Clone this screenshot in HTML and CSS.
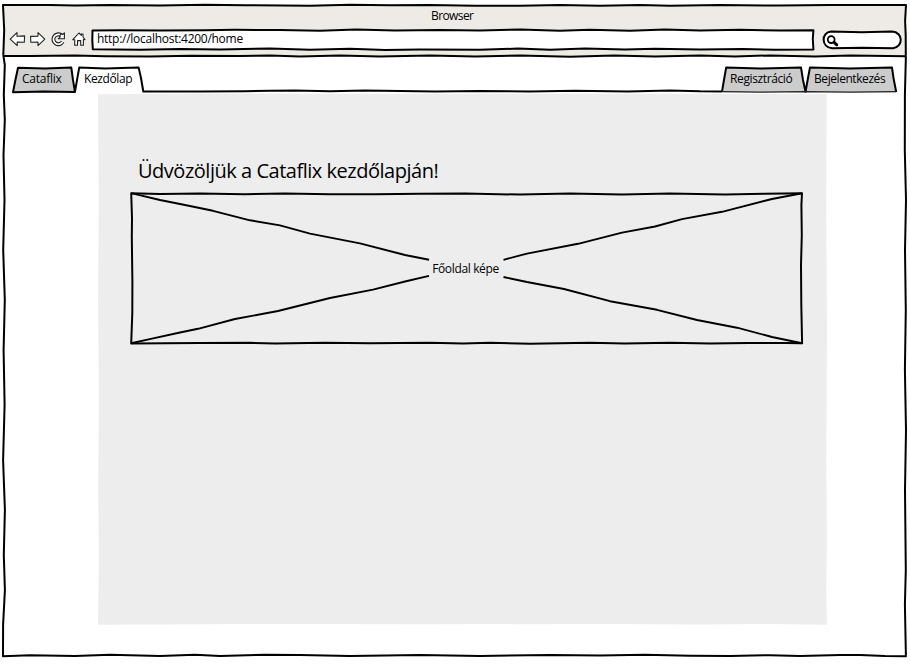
FILE: index.html
```
<!DOCTYPE html>
<html lang="hu">
<head>
<meta charset="utf-8">
<title>Cataflix</title>
<link rel="stylesheet" href="styles.css">
</head>
<body>
<div class="window">
  <header class="chrome">
    <svg class="sketch" viewBox="0 0 910 57" aria-hidden="true">
      <path class="chrome-fill" d="M3 5H906V56H3Z"/>
    </svg>
    <div class="title"><span>Browser</span></div>
    <div class="toolbar">
      <svg class="nav-icons" viewBox="8 30 80 18" aria-hidden="true">
        <path d="M10.2 39.2 17 32.6V36.2L24.6 35.9 24.3 42.3 17.2 42V45.6Z"/>
        <path d="M44.8 39.2 38 32.6V36.1L30.6 36.4 30.8 42.2 38 42V45.6Z"/>
        <path class="arc-outer" d="M61 35.2A4.9 4.9 0 1 0 62.6 41.6"/>
        <path class="arc-inner" d="M61 35.2A4.9 4.9 0 1 0 62.9 41.2"/>
        <path d="M64.4 32.8V38.8H58.2L60.2 36.8A2.9 2.9 0 0 0 59.4 36.4L61.4 33.6 62.6 34.5Z"/>
        <path d="M72.8 39.7 79 33 81.4 35.3V34H83V37L85 39.6H83.4V45.2H80.7V40.6H77.5V45.2H74.7V39.7Z"/>
      </svg>
      <div class="address">
        <svg class="address-box" viewBox="91 28 725 23" aria-hidden="true">
          <path class="box" d="M92.5 30.5 120 30.2 160 30.6 205 30.2 235 29.8 280 30.1 320 30.8 356 29.6 395 30.6 440 30 480 30.5 520 29.6 560 30.8 590 29.8 630 30.7 665 29.6 700 30.4 740 29.8 780 30.4 813.4 30.2 812.8 39 813.4 49.4 775 49.7 743 49.1 700 49.6 655 48.7 625 49.6 585 48.6 550 49.7 518 48.6 480 49.8 420 49.5 385 49.9 350 48.7 310 49.7 270 48.5 220 49.4 180 49 140 49.7 92.8 49.2 92.3 40Z"/>
        </svg>
        <span>http://localhost:4200/home</span>
      </div>
      <svg class="search" viewBox="821 29 82 22" aria-hidden="true">
        <path class="box" d="M831 31.6 862 32.2 892 31.6C903.5 32 903.5 47 893 48.2L862 47.8 832 48.2C821 47 821 32.4 831 31.6Z"/>
        <circle class="lens" cx="831.2" cy="39.6" r="3.4"/>
        <path class="handle" d="M834.1 42.4 836.8 44.8"/>
      </svg>
    </div>
  </header>
  <nav class="tabs">
    <svg class="sketch" viewBox="0 57 910 37" aria-hidden="true">
      <path class="tab-fill" d="M13 92.5 18 67.7 45 68.6 71.3 67.7 75 92.2Z"/>
      <path class="tab-fill" d="M722 92.2 726.2 67.3 760 68.6 801 67.5 805.5 92.2Z"/>
      <path class="tab-fill" d="M805.5 92.2 810 67.3 850 68.6 892 67.7 896.2 92.2Z"/>
      <path class="line" d="M75 91.6 79.2 67.6 105 68.5 138.6 67.4 141 78 143.3 91.5 200 91.6 245 91.2 270 90.8 295 90.6 330 91.3 365 90.5 400 91.1 435 91.6 480 91 530 91.6 575 90.7 628 91.5 670 90.5 700 91.3 722 91.4"/>
      <path class="line" d="M13 92.2 15.4 80 18 67.7 45 68.5 71.3 67.6 73 80 75 92 44 91.6Z"/>
      <path class="line" d="M722 91.6 724.3 78 726.2 67.4 760 68.6 801 67.5 803 80 805.5 91.8 808 78 810 67.4 850 68.5 892 67.6 893.5 78 896.2 92"/>
      <path class="thin" d="M722 91.7 760 92.2 805 91.6 850 92.2 896 91.6"/>
    </svg>
    <div class="tab-group">
      <a class="tab cataflix">Cataflix</a>
      <a class="tab home">Kezdőlap</a>
    </div>
    <div class="tab-group">
      <a class="tab register">Regisztráció</a>
      <a class="tab login">Bejelentkezés</a>
    </div>
  </nav>
  <main class="page">
    <svg class="sketch" viewBox="98 93 729 532" aria-hidden="true">
      <path class="page-fill" d="M98 94.2 250 93.6 400 94 610 93.7 826.7 94.2 826.2 210 827 330 826.3 460 826.9 540 826.2 590 826.9 624.7 770 624 700 624.4 610 623.9 430 624.3 250 624 98 624.8 98.8 560 98.2 490 98.8 400 98.1 300 98.7 200Z"/>
    </svg>
    <h1><span>Üdvözöljük a Cataflix kezdőlapján!</span></h1>
    <figure class="picture">
      <svg class="sketch" viewBox="129 191 675 154" aria-hidden="true">
        <path class="line" d="M131.2 193.2 160 194.1 200 193.6 245 194.3 285 193.5 330 194.3 375 194.3 420 193.8 465 193.4 520 194.6 570 193.6 622 194.5 670 193.5 725 194.5 765 193.7 802 193.2 801.4 205 801.8 235 801 265 801.3 305 802.1 343.3 785 342.9 748 343 710 343.5 670 342.8 625 343.6 590 342.7 530 343.7 490 342.8 463 343.5 430 342.8 370 343.2 325 342.7 275 343.5 250 342.8 200 343.1 131.2 343.5 132.3 313 132.4 282 131.8 237 132 218Z"/>
        <path class="diagonal" d="M131.2 193.2 160 200 185 205 213 210.8 250 220.3 280 225.4 310 233.6 360 243.4 405 255 429 259.8"/>
        <path class="diagonal" d="M131.2 343.3 152 338.6 180 332.5 198 328.8 235 319 278 311 330 298 373 289.6 405 281.5 429 275.8"/>
        <path class="diagonal" d="M802 193.2 772 199 722 211.8 682 219.1 655 226.5 622 232.6 578 243.8 527 253.6 503.5 259.8"/>
        <path class="diagonal" d="M802 343.3 772 337 737 327.7 697 320 657 309.8 610 301.2 564 289 527 282 503.5 277"/>
      </svg>
      <figcaption>Főoldal képe</figcaption>
    </figure>
  </main>
  <svg class="sketch frame" viewBox="0 0 910 664" aria-hidden="true">
    <path class="line" d="M3 5 50 5.1 75 5.6 110 5 160 5.5 205 4.8 245 5.2 310 5.7 350 4.8 390 5.3 430 4.9 475 5.7 520 5.7 560 4.9 600 5.8 640 5 670 5.7 720 4.9 780 5.6 830 5 906 5 905.1 21 905.7 35 905.8 60 904.9 95 904.8 150 906 200 905 250 905.8 310 904.9 370 906 430 905 490 905.8 570 904.9 605 905.9 656.2 885 656 860 655 840 655.1 800 656 770 655.2 730 656 690 655.7 645 654.8 600 655.6 550 655 480 656 420 655 350 656 300 655 265 654.7 220 656 195 654.8 160 656 110 654.7 75 655.9 30 655.3 3 656.3 3.1 625 4.9 590 3.8 555 4.9 510 3.1 460 4.6 405 3.6 350 4.8 300 3.2 250 4.5 200 3.5 155 4.8 120 3.8 95 4.8 65 3.3 55 4.2 30Z"/>
    <path class="line" d="M3 56.1 30 56 75 55.5 105 56.2 150 56.5 190 55.7 240 56.1 270 55.5 300 56.4 340 55.4 380 56.6 430 55.5 475 56.5 520 55.4 570 56.7 614 55.5 655 56.5 700 55.4 735 56.6 770 55.4 815 56.4 850 55.6 906 56.2"/>
  </svg>
</div>
</body>
</html>
```
FILE: styles.css
```
* { box-sizing: border-box; }

body {
  margin: 0;
  background: #fff;
  color: #000;
  font: 12px/16px "Open Sans", "Noto Sans", sans-serif;
}

.window {
  position: relative;
  width: 910px;
  height: 664px;
  overflow: hidden;
}

svg { display: block; fill: none; stroke: none; }

/* Hand-drawn outlines sit behind the content of their container */
.sketch {
  position: absolute;
  inset: 0;
  width: 100%;
  height: 100%;
  z-index: -1;
}

.frame { z-index: 1; pointer-events: none; }

.line, .box, .diagonal {
  stroke: #000;
  stroke-width: 2;
  stroke-linejoin: round;
}
.box { fill: #fff; }
.diagonal { stroke-width: 1.9; }
.thin { stroke: #222; stroke-width: 1.3; }
.chrome-fill { fill: #eeebe6; }
.tab-fill { fill: #ccc; }
.page-fill { fill: #ededed; }

.chrome, .tabs, .page, .picture, .address {
  position: relative;
  z-index: 0;
}

.chrome { height: 57px; padding-top: 8px; }

.title { padding-left: 431px; height: 20px; letter-spacing: -0.6px; }

.toolbar { display: flex; height: 23px; }

.nav-icons { width: 80px; height: 18px; margin: 2px 3px 0 8px; }
.nav-icons path { fill: #fff; stroke: #222; stroke-width: 1.1; stroke-linejoin: round; }
.nav-icons .arc-outer { fill: none; stroke-width: 4; }
.nav-icons .arc-inner { fill: none; stroke: #fff; stroke-width: 1.7; }

.address { width: 725px; padding: 3px 6px; letter-spacing: -0.27px; }
.address-box { position: absolute; inset: 0; width: 725px; height: 23px; z-index: -1; }

.search { width: 82px; height: 22px; margin: 1px 0 0 5px; }
.lens { stroke: #000; stroke-width: 1.8; }
.handle { stroke: #000; stroke-width: 3; stroke-linecap: round; }

.tabs {
  display: flex;
  justify-content: space-between;
  height: 37px;
  padding: 14px 25px 0 22px;
}
.tab-group { display: flex; white-space: nowrap; letter-spacing: -0.38px; }
.cataflix { width: 62px; letter-spacing: -0.25px; }
.register { width: 84px; }
.login { width: 71px; letter-spacing: -0.43px; }

.page { width: 729px; height: 532px; margin: -1px 0 0 98px; padding: 64px 25px 0 31px; }

h1 {
  height: 34px;
  margin: 0;
  padding-left: 9px;
  font-size: 20px;
  font-weight: 400;
  line-height: 28px;
  letter-spacing: -0.48px;
}

.picture {
  display: flex;
  align-items: center;
  justify-content: center;
  width: 675px;
  height: 154px;
  margin: 0;
  padding: 1px 2px 0 0;
  letter-spacing: -0.35px;
}
```
